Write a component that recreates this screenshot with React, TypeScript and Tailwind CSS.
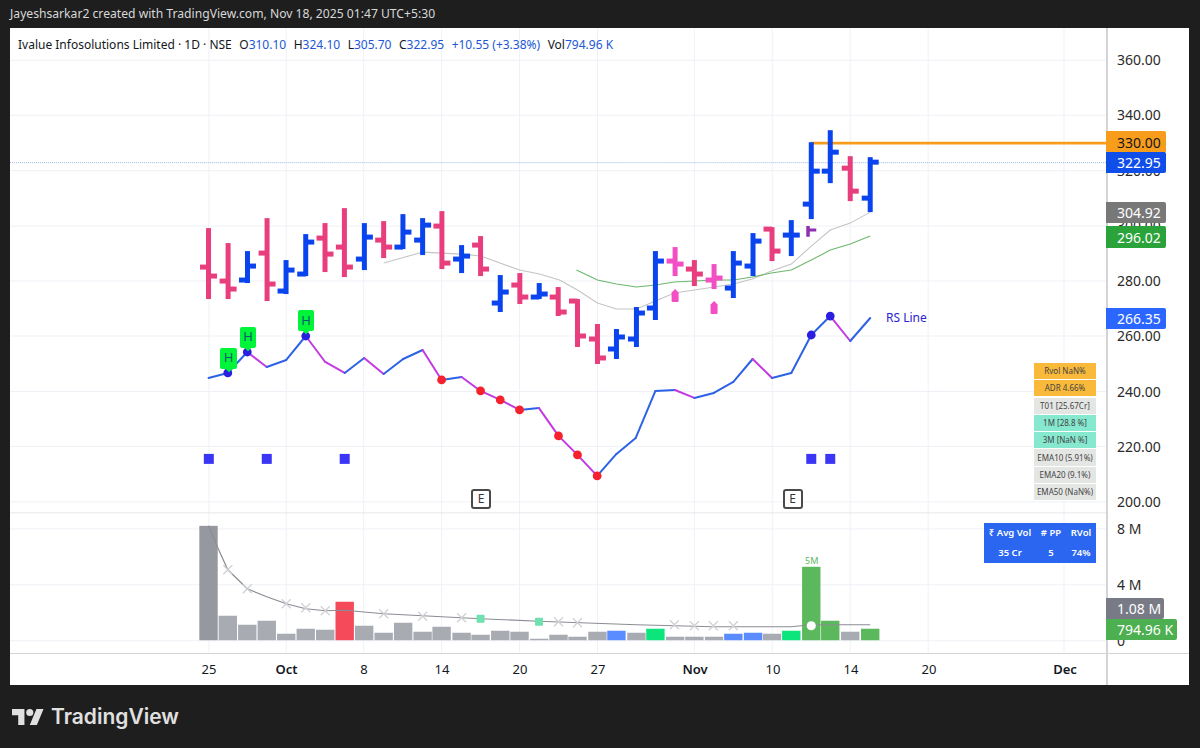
const PINK = "#e83e7e";
const BLUE = "#0a44ee";
const HOT = "#f24fc4";

// x, high, low, open, close, colour (page pixels)
const bars: [number, number, number, number, number, string][] = [
  [208.7, 228, 299, 267, 276, PINK],
  [228.3, 243, 299, 281, 289, PINK],
  [247.7, 251, 283, 280, 266, BLUE],
  [267.3, 218, 301, 253, 284, PINK],
  [286.3, 260, 294, 291, 270, BLUE],
  [306, 234, 276, 274, 242, BLUE],
  [325.3, 223, 272, 238, 254, PINK],
  [344.7, 208, 277, 247, 267, PINK],
  [364.7, 223, 270, 259, 237, BLUE],
  [384, 221, 258, 240, 247, PINK],
  [403.3, 214, 249, 247, 232, BLUE],
  [423, 218, 255, 240, 225, BLUE],
  [442.3, 211, 269, 226, 263, PINK],
  [462, 245, 273, 259, 256, BLUE],
  [481, 236, 276, 245, 269, PINK],
  [500.7, 275, 312, 303, 292, BLUE],
  [520.3, 273, 304, 285, 297, PINK],
  [539.7, 283, 299, 297, 294, BLUE],
  [558.7, 287, 316, 297, 312, PINK],
  [578, 299, 347, 301, 336, PINK],
  [598, 324, 364, 339, 358, PINK],
  [617, 329, 359, 349, 337, BLUE],
  [637, 307, 347, 339, 313, BLUE],
  [656, 251, 320, 308, 261, BLUE],
  [675.7, 247, 276, 261, 264, HOT],
  [695, 260, 286, 269, 274, PINK],
  [714.7, 264, 289, 280, 278, HOT],
  [734, 251, 298, 288, 263, BLUE],
  [753.7, 233, 276, 266, 241, BLUE],
  [772.7, 227, 261, 229, 251, PINK],
  [792, 220, 256, 235, 235, BLUE],
  [812, 142, 219, 204, 171, BLUE],
  [831, 130, 183, 171, 152, BLUE],
  [851, 156, 201, 168, 191, PINK],
  [871, 157, 212, 198, 162, BLUE],
];

const grayMa = "384,263 423,252 442,253 462,254 481,256 520,270 540,274 560,280 578,290 598,303 617,309 637,309 656,301 675,293 695,290 715,287 734,284 753,279 772,271 792,264 812,246 831,230 851,223 871,212";
const greenMa = "577,270 598,280 617,284 637,287 656,285 675,282 695,281 715,280 734,280 753,277 772,273 792,270 812,260 831,250 851,244 871,236";

const rs: [number, number][] = [
  [208.7, 378], [228, 373], [247.5, 352], [267, 367], [286.5, 360], [306, 336], [325.5, 362], [345, 373], [364.5, 358],
  [384, 374], [403.5, 359], [423, 350], [442, 380], [462, 377], [481, 391], [500.7, 400], [520, 410], [539.3, 408],
  [559, 436], [578, 455], [597.7, 476], [617, 454], [636.3, 438], [656, 391], [675.5, 390], [695, 398], [714.5, 393],
  [734, 382], [753.3, 359], [772.7, 378], [792, 373], [812, 335], [831, 316], [851, 341], [871, 318],
];
const blueDots = [1, 2, 5, 31, 32];
const redDots = [12, 14, 15, 16, 18, 19, 20];

const GR = "#a9abb2";
const BL = "#5b8cff";
const GN = "#5cb85c";
const volumes: [number, number, string][] = [
  [208.7, 526, "#96989f"], [228, 616, GR], [247.5, 625, GR], [267, 621, GR], [286.5, 634, GR], [306, 629, GR],
  [325.5, 630, GR], [345, 602, "#f44a5a"], [364.5, 626, GR], [384, 633, GR], [403.5, 623, GR], [423, 632, GR],
  [442, 627, GR], [462, 633, GR], [481, 635, GR], [500.7, 631, GR], [520, 632, GR], [539.7, 639, GR], [559, 635, GR],
  [578, 637, GR], [598, 632, GR], [617, 631, BL], [637, 633, GR], [656, 629, "#0be57c"], [675.7, 637, GR], [695, 637, GR],
  [714.7, 637, GR], [734, 634, BL], [753.7, 633, BL], [772.7, 634, GR], [792, 631, "#0be57c"], [812, 567, GN],
  [831, 621, GN], [851, 632, GR], [871, 629, GN],
];
const avgVol = "208.7,526 218,548 228,570 247.5,589 267,597 286.5,604 306,609 325.5,611 345,610.5 384,614 423,616 481,619 539,621.5 637,625 714,627 792,627 812,625 871,625";
const crosses: [number, number][] = [[228, 570], [247.5, 589], [286.5, 604], [306, 608], [325.5, 611], [384, 614], [423, 616.5], [462, 618], [559, 622], [578, 623], [675, 625], [695, 626], [714, 626], [734, 626]];

const verticals = [209, 286.5, 364, 442, 520, 598, 695, 773, 851, 929, 1065];
const horizontals = [60, 115, 170.5, 226, 281, 336, 391.5, 446.5, 502, 529, 585, 641];

const priceLabels = [
  ["360.00", 60], ["340.00", 115], ["320.00", 170.5], ["300.00", 226], ["280.00", 281], ["260.00", 336],
  ["240.00", 391.5], ["220.00", 446.5], ["200.00", 502], ["8 M", 529], ["4 M", 585], ["0", 641],
] as const;

const tags = [
  { text: "330.00", y: 142, w: 60, bg: "#f89c1b", fg: "#131722" },
  { text: "322.95", y: 162.5, w: 60, bg: "#0f4ee8", fg: "#ffffff" },
  { text: "304.92", y: 212.5, w: 60, bg: "#787878", fg: "#ffffff" },
  { text: "296.02", y: 237, w: 60, bg: "#2aa33a", fg: "#ffffff" },
  { text: "266.35", y: 318.5, w: 60, bg: "#2a66ff", fg: "#ffffff" },
  { text: "1.08 M", y: 608.5, w: 58, bg: "#787b86", fg: "#ffffff" },
  { text: "794.96 K", y: 629.5, w: 71, bg: "#4caf50", fg: "#ffffff" },
];

const timeLabels = [
  ["25", 209, false], ["Oct", 286.5, true], ["8", 364, false], ["14", 442, false], ["20", 520, false], ["27", 598, false],
  ["Nov", 695, true], ["10", 773, false], ["14", 851, false], ["20", 929, false], ["Dec", 1065, true],
] as const;

const ohlc = [["O", "310.10"], ["H", "324.10"], ["L", "305.70"], ["C", "322.95"]];

const stats = [
  ["Rvol NaN%", "bg-[#f9b93a]"],
  ["ADR 4.66%", "bg-[#f9b93a]"],
  ["T01 [25.67Cr]", "bg-[#e4e6e4]"],
  ["1M [28.8 %]", "bg-[#86e8cf]"],
  ["3M [NaN %]", "bg-[#86e8cf]"],
  ["EMA10 (5.91%)", "bg-[#e4e6e4]"],
  ["EMA20 (9.1%)", "bg-[#e4e6e4]"],
  ["EMA50 (NaN%)", "bg-[#e4e6e4]"],
];

const hBadges = [[228.5, 347.5], [248, 326.5], [306, 310]];
const eBadges = [481, 792.5];

function Plot() {
  return (
    <svg viewBox="10 28 1097 625" className="block h-full w-full">
      {verticals.map((x) => (
        <line key={x} x1={x} x2={x} y1={28} y2={653} stroke="#eff1f6" />
      ))}
      {horizontals.map((y) => (
        <line key={y} x1={10} x2={1107} y1={y} y2={y} stroke="#eff1f6" />
      ))}
      <line x1={10} x2={1107} y1={513} y2={513} stroke="#e6e8ec" />
      <line x1={10} x2={1107} y1={162.5} y2={162.5} stroke="#9db7ee" strokeDasharray="1 1" />

      {volumes.map(([x, top, color]) => (
        <rect key={x} x={x - 9.2} y={top} width={18.4} height={640.5 - top} fill={color} />
      ))}
      <polyline points={avgVol} fill="none" stroke="#8b8d94" strokeWidth={1.2} />
      {crosses.map(([x, y]) => (
        <path key={x} d={`M${x - 4.5} ${y - 4.5}L${x + 4.5} ${y + 4.5}M${x - 4.5} ${y + 4.5}L${x + 4.5} ${y - 4.5}`} stroke="#cfd0d4" strokeWidth={1.2} />
      ))}
      <rect x={477} y={615} width={8} height={8} rx={1} fill="#6fe0b0" />
      <rect x={535.5} y={618} width={8} height={8} rx={1} fill="#6fe0b0" />
      <circle cx={812} cy={626} r={4.6} fill="#ffffff" />

      <polyline points={grayMa} fill="none" stroke="#c4c4c4" strokeWidth={1.1} />
      <polyline points={greenMa} fill="none" stroke="#6cb76c" strokeWidth={1.1} />
      <line x1={812} x2={1107} y1={143} y2={143} stroke="#f89c1b" strokeWidth={2.8} />

      {bars.map(([x, high, low, open, close, color]) => (
        <g key={x} fill={color}>
          <rect x={x - 2.5} y={high} width={5} height={low - high} />
          <rect x={x - 8.5} y={open - 2.5} width={8.5} height={5} />
          <rect x={x} y={close - 2.5} width={8.5} height={5} />
        </g>
      ))}
      <path d="M807 226h3.5v2.5h6.5v3h-6.5v5.2H807z" fill="#8e2fb0" />
      <path d="M672.2 292.5l3.5-3.5 3.5 3.5v8.5q0 1-1 1h-5q-1 0-1-1z" fill={HOT} />
      <path d="M711.2 304.5l3.5-3.5 3.5 3.5v8.5q0 1-1 1h-5q-1 0-1-1z" fill={HOT} />

      {rs.slice(1).map(([x, y], i) => {
        const [px, py] = rs[i];
        return <line key={x} x1={px} y1={py} x2={x} y2={y} stroke={y <= py ? "#2e62e6" : "#c23ae0"} strokeWidth={2} strokeLinecap="round" />;
      })}
      {blueDots.map((i) => (
        <circle key={i} cx={rs[i][0]} cy={rs[i][1]} r={4.4} fill="#2a1fe0" />
      ))}
      {redDots.map((i) => (
        <circle key={i} cx={rs[i][0]} cy={rs[i][1]} r={4.4} fill="#f5222d" />
      ))}

      {[209, 267, 345, 812, 831].map((x) => (
        <rect key={x} x={x - 5} y={454} width={10} height={10} fill="#3b35f5" />
      ))}
    </svg>
  );
}

export default function App() {
  return (
    <div className="flex h-[748px] w-[1200px] flex-col overflow-hidden bg-[#1e1e1e] font-['Noto_Sans',sans-serif]">
      <div className="flex h-[28px] items-center pl-[10px] text-[12.15px] text-[#d8d8d8]">
        Jayeshsarkar2 created with TradingView.com, Nov 18, 2025 01:47 UTC+5:30
      </div>

      <div className="ml-[10px] flex h-[657px] w-[1179px] flex-col bg-white">
        <div className="flex h-[625px]">
          <div className="relative w-[1096px]">
            <Plot />

            <div className="absolute left-[8px] top-[8px] flex items-center text-[12px] leading-[18px] text-[#131722]">
              <span>Ivalue Infosolutions Limited · 1D · NSE</span>
              {ohlc.map(([k, v]) => (
                <span key={k} className="ml-[7.5px]">
                  {k}
                  <span className="text-[#2157d6]">{v}</span>
                </span>
              ))}
              <span className="ml-[7.5px] text-[#2157d6]">+10.55 (+3.38%)</span>
              <span className="ml-[7.5px]">
                Vol<span className="text-[#2157d6]">794.96 K</span>
              </span>
            </div>

            {hBadges.map(([x, y]) => (
              <div
                key={x}
                className="absolute flex h-[21px] w-[16.5px] items-center justify-center rounded-[2px] bg-[#00f53a] text-[13px] text-[#0a5a6a]"
                style={{ left: x - 18.25, top: y - 28 }}
              >
                H
                <span className="absolute -bottom-[2px] left-[5.25px] h-[6px] w-[6px] rotate-45 bg-[#00f53a]" />
              </div>
            ))}
            {eBadges.map((x) => (
              <div
                key={x}
                className="absolute top-[461px] flex h-[20px] w-[20px] items-center justify-center rounded-[3px] border-2 border-[#4a4a4a] bg-white text-[12px] text-[#333]"
                style={{ left: x - 20 }}
              >
                E
              </div>
            ))}

            <span className="absolute left-[876px] top-[281px] text-[12px] text-[#2a22d0]">RS Line</span>
            <span className="absolute left-[795px] top-[527px] text-[9px] leading-[12px] text-[#5cb85c]">5M</span>

            <div className="absolute left-[1024px] top-[335px] flex w-[62px] flex-col gap-[1.1px]">
              {stats.map(([label, bg]) => (
                <div key={label} className={`flex h-[16.2px] items-center justify-center whitespace-nowrap text-[8px] text-[#444] ${bg}`}>
                  {label}
                </div>
              ))}
            </div>

            <div className="absolute left-[974px] top-[495px] grid h-[40px] w-[112px] grid-cols-[52px_30px_30px] items-center bg-[#2a66f0] text-center text-[9.5px] font-semibold text-white">
              <span>₹ Avg Vol</span>
              <span># PP</span>
              <span>RVol</span>
              <span>35 Cr</span>
              <span>5</span>
              <span>74%</span>
            </div>
          </div>

          <div className="relative flex-1 border-l-2 border-[#d4d4d6]">
            {priceLabels.map(([label, y]) => (
              <span
                key={label}
                className="absolute left-[9px] text-[14px] leading-[20px] text-[#2a2a2a]"
                style={{ top: y - 38 }}
              >
                {label}
              </span>
            ))}
            {tags.map((t) => (
              <div
                key={t.text}
                className="absolute -left-[2px] flex h-[21.5px] items-center rounded-r-[2px] pl-[11px] text-[14px]"
                style={{ top: t.y - 38.75, width: t.w, backgroundColor: t.bg, color: t.fg }}
              >
                {t.text}
              </div>
            ))}
          </div>
        </div>

        <div className="flex flex-1 border-t border-[#d4d4d6]">
          <div className="relative w-[1096px]">
            {timeLabels.map(([label, x, strong]) => (
              <span
                key={`${label}${x}`}
                className={`absolute top-[5px] w-[40px] -translate-x-1/2 text-center text-[13px] leading-[20px] text-[#131722] ${strong ? "font-semibold" : ""}`}
                style={{ left: x - 10 }}
              >
                {label}
              </span>
            ))}
          </div>
          <div className="flex-1 border-l-2 border-[#d4d4d6]" />
        </div>
      </div>

      <div className="flex flex-1 items-center gap-[7px] pl-[12px]">
        <svg viewBox="0 0 36 18" className="h-[16px] w-[32px]" fill="#e0e0e0">
          <path d="M14 18H7V7H0V0h14v18zM28 18h-8L27.5 0h8L28 18z" />
          <circle cx="20" cy="4" r="4" />
        </svg>
        <span className="font-['Inter',sans-serif] text-[21px] font-semibold text-[#e0e0e0]">TradingView</span>
      </div>
    </div>
  );
}
